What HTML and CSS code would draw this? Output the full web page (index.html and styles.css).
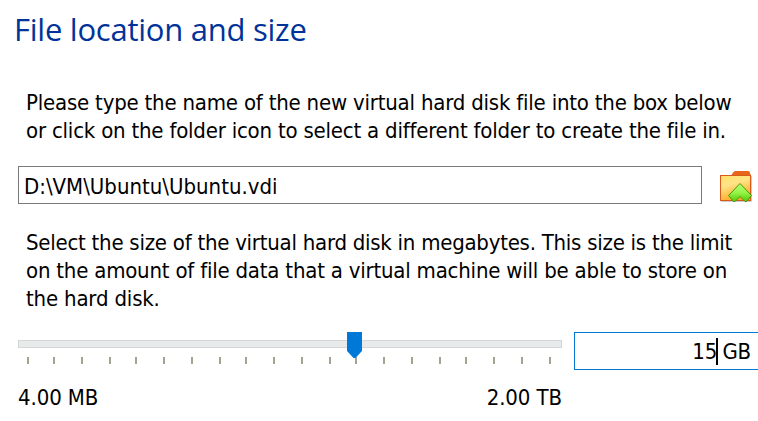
FILE: index.html
```html
<!DOCTYPE html>
<html lang="en">
<head>
<meta charset="utf-8">
<title>Create Virtual Hard Disk</title>
<link rel="stylesheet" href="styles.css">
</head>
<body>
<main class="page">
  <h1 class="title">File location and size</h1>
  <p class="text"><span class="line l1">Please type the name of the new virtual hard disk file into the box below</span><span class="line l2">or click on the folder icon to select a different folder to create the file in.</span></p>
  <div class="file-row">
    <div class="path"><span class="line">D:\VM\Ubuntu\Ubuntu.vdi</span></div>
    <svg class="folder" width="34" height="34" viewBox="0 0 34 34">
      <defs>
        <linearGradient id="fold" x1="0" y1="0" x2="0.35" y2="1"><stop offset="0" stop-color="#ffe066"/><stop offset="0.4" stop-color="#ffe488"/><stop offset="1" stop-color="#ffac28"/></linearGradient>
        <linearGradient id="arrow" x1="0" y1="0" x2="0" y2="1"><stop offset="0" stop-color="#b4ff70"/><stop offset="0.5" stop-color="#96f548"/><stop offset="1" stop-color="#55c80a"/></linearGradient>
      </defs>
      <path d="M2 31.500H32.500V6" fill="none" stroke="#ccc"/>
      <path d="M12 6L14 2.500Q15 1 16.500 1H29Q31 1 31 3L32 6V9H12Z" fill="#e8641b"/>
      <rect x="1.500" y="5.500" width="30" height="25" fill="url(#fold)" stroke="#d95a1a"/>
      <path d="M21 13.500L32.500 25.500L27.500 31.500H26L21 26.500L16 31.500H14.500L9.500 25.500Z" fill="url(#arrow)" stroke="#429a0d"/>
    </svg>
  </div>
  <p class="text second"><span class="line l4">Select the size of the virtual hard disk in megabytes. This size is the limit</span><span class="line l5">on the amount of file data that a virtual machine will be able to store on</span><span class="line l6">the hard disk.</span></p>
  <div class="size-row">
    <div class="slider">
      <svg class="scale" width="544" height="38" viewBox="0 0 544 38">
        <rect x="0.500" y="8.500" width="543" height="7" fill="#e7eaea" stroke="#d6d6d6"/>
        <path d="M10 25v7M36 25v7M64 25v7M92 25v7M118 25v7M146 25v7M174 25v7M202 25v7M228 25v7M256 25v7M284 25v7M312 25v7M338 25v7M366 25v7M394 25v7M422 25v7M448 25v7M476 25v7M504 25v7M532 25v7" stroke="#a5a294" stroke-width="2"/>
        <path d="M329 0H344V19L337.500 26H335.500L329 19Z" fill="#0078d7"/>
      </svg>
      <div class="limits"><span>4.00 MB</span><span>2.00 TB</span></div>
    </div>
    <div class="size"><span class="value">15</span><i class="caret"></i><span class="unit">GB</span></div>
  </div>
</main>
</body>
</html>
```
FILE: styles.css
```css
* { box-sizing: border-box; }
body { margin: 0; background: #fff; color: #000; font: 22px/28px "DejaVu Sans Condensed", "DejaVu Sans", sans-serif; font-stretch: condensed; overflow: hidden; }
.page { width: 758px; height: 421px; padding-top: 8px; overflow: hidden; }
.title { margin: 0 0 0 14px; height: 81px; font: 400 31px/43px "Open Sans", sans-serif; letter-spacing: -0.25px; color: #039; white-space: nowrap; }
.text { margin: 0 0 0 26px; }
.line { display: block; width: max-content; white-space: nowrap; }
.l1 { letter-spacing: -0.205px; }
.l2 { letter-spacing: -0.21px; }
.l4 { letter-spacing: -0.25px; }
.l5 { letter-spacing: -0.21px; }
.l6 { letter-spacing: -0.18px; }
.file-row { display: flex; margin: 21px 0 0 18px; height: 38px; }
.path { width: 684px; height: 38px; padding: 6px 5px 0; border: 1px solid #7a7a7a; }
.folder { margin: 4px 0 0 17px; flex: none; }
.second { margin-top: 25px; }
.size-row { display: flex; margin: 19px 0 0 18px; }
.slider { width: 544px; flex: none; }
.scale { display: block; }
.limits { display: flex; justify-content: space-between; margin-top: 14px; letter-spacing: -0.1px; }
.size { display: flex; align-items: center; justify-content: flex-end; width: 200px; height: 38px; margin-left: 12px; padding: 2px 22px 0 0; border: 1px solid #0078d7; flex: none; }
.value { margin-right: -1px; }
.caret { width: 2px; height: 27px; margin-bottom: 2px; background: #000; }
.unit { margin-left: 4px; letter-spacing: -0.2px; }
```
